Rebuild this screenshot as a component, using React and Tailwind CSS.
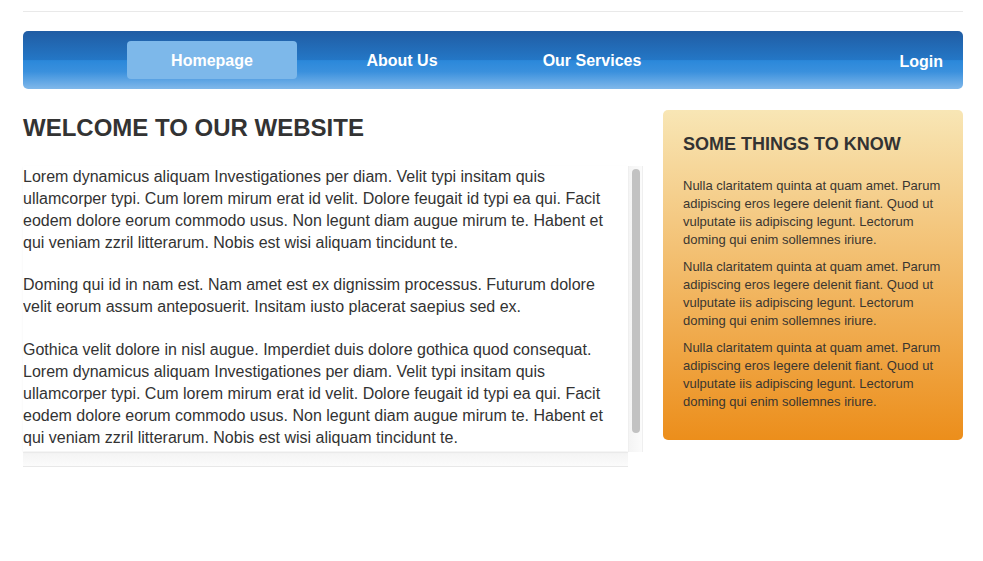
export default function App() {
  const font = { fontFamily: '"Liberation Sans", Arial, Helvetica, sans-serif' };
  return (
    <div className="min-h-[561px] bg-white" style={font}>
      <div className="ml-[23px] w-[940px] pt-[11px]">
        <div className="border-t border-[#e9e9e9]" />
        <nav className="mt-[19px] flex h-[58px] items-center rounded-[5px] bg-[linear-gradient(to_bottom,#205ca3_0%,#2477c6_50%,#2b88da_51%,#3a90dd_70%,#80b8ea_100%)] pl-[104px] pr-[20px]">
          <div className="flex gap-[20px]">
            <a className="flex h-[38px] w-[170px] items-center justify-center rounded-[4px] bg-[#7db8ea] pt-[2px] text-[16px] font-bold text-white">Homepage</a>
            <a className="flex h-[38px] w-[170px] items-center justify-center pt-[2px] text-[16px] font-bold text-white">About Us</a>
            <a className="flex h-[38px] w-[170px] items-center justify-center pt-[2px] text-[16px] font-bold text-white">Our Services</a>
          </div>
          <a className="ml-auto mt-[4px] text-[16px] font-bold text-white">Login</a>
        </nav>

        <div className="mt-[21px] flex gap-[20px]">
          <div className="w-[620px]">
            <h1 className="h-[36px] text-[24px] font-bold leading-[36px] text-[#333]">WELCOME TO OUR WEBSITE</h1>
            <div className="mt-[20px] flex">
              <div className="h-[285px] w-[605px] overflow-hidden text-[16px] leading-[22px] text-[#333] shadow-[0_1px_2px_rgba(0,0,0,0.06)]">
                <p className="mb-[20px] whitespace-nowrap">
                  Lorem dynamicus aliquam Investigationes per diam. Velit typi insitam quis<br />
                  ullamcorper typi. Cum lorem mirum erat id velit. Dolore feugait id typi ea qui. Facit<br />
                  eodem dolore eorum commodo usus. Non legunt diam augue mirum te. Habent et<br />
                  qui veniam zzril litterarum. Nobis est wisi aliquam tincidunt te.
                </p>
                <p className="mb-[21px] whitespace-nowrap">
                  Doming qui id in nam est. Nam amet est ex dignissim processus. Futurum dolore<br />
                  velit eorum assum anteposuerit. Insitam iusto placerat saepius sed ex.
                </p>
                <p className="whitespace-nowrap">
                  Gothica velit dolore in nisl augue. Imperdiet duis dolore gothica quod consequat.<br />
                  Lorem dynamicus aliquam Investigationes per diam. Velit typi insitam quis<br />
                  ullamcorper typi. Cum lorem mirum erat id velit. Dolore feugait id typi ea qui. Facit<br />
                  eodem dolore eorum commodo usus. Non legunt diam augue mirum te. Habent et<br />
                  qui veniam zzril litterarum. Nobis est wisi aliquam tincidunt te.
                </p>
              </div>
              <div className="h-[286px] w-[15px] border-x border-[#efefef] bg-[linear-gradient(to_right,#f4f4f4,#fbfbfb)] pl-[3px] pt-[3px]">
                <div className="h-[264px] w-[8px] rounded-[4px] bg-[#c2c2c2]" />
              </div>
            </div>
            <div className="h-[15px] w-[605px] border-b border-t border-[#e8e8e8] border-t-[#eeeeee] bg-[linear-gradient(to_bottom,#f4f4f4,#fbfbfb)]" />
          </div>

          <aside className="h-[330px] w-[300px] rounded-[5px] bg-[linear-gradient(to_bottom,#f8e6b5,#ec8e1b)] px-[20px] pt-[23px] text-[#333]">
            <h2 className="mb-[22px] text-[18px] font-bold leading-[22px] text-[#333]">SOME THINGS TO KNOW</h2>
            {[0, 1, 2].map((i) => (
              <p key={i} className="mb-[9px] whitespace-nowrap text-[13px] leading-[18px] text-[#3a3630]">
                Nulla claritatem quinta at quam amet. Parum<br />
                adipiscing eros legere delenit fiant. Quod ut<br />
                vulputate iis adipiscing legunt. Lectorum<br />
                doming qui enim sollemnes iriure.
              </p>
            ))}
          </aside>
        </div>
      </div>
    </div>
  );
}
